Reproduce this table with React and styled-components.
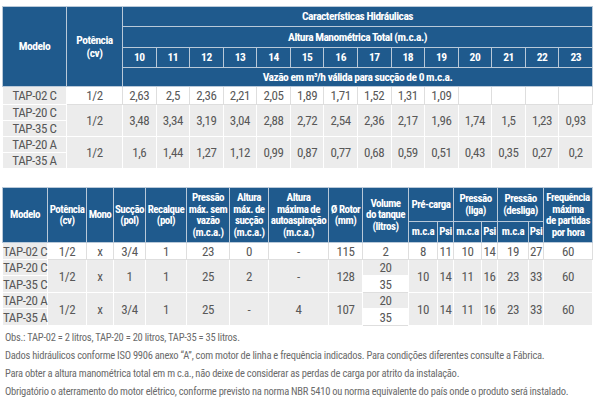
import React from 'react';
import styled, { createGlobalStyle } from 'styled-components';

const GlobalStyle = createGlobalStyle`
  html, body {
    margin: 0;
    padding: 0;
    background: #fff;
  }
  body {
    font-family: "Roboto Condensed", "Open Sans Condensed", "Arial Narrow", "Liberation Sans Narrow", "Roboto", sans-serif;
    font-stretch: condensed;
  }
`;

const Page = styled.div`
  width: 600px;
  height: 412px;
  padding: 6px 8px 0 2px;
  box-sizing: border-box;
  overflow: hidden;
`;

const Table = styled.table`
  width: 590px;
  table-layout: fixed;
  border-collapse: collapse;
  margin-bottom: ${(p) => p.$gap || 0}px;
`;

const Col = styled.col`
  width: ${(p) => p.$w}px;
`;

const Row = styled.tr`
  height: ${(p) => p.$h}px;
`;

const Th = styled.th`
  background: #1f5a8d;
  color: #fff;
  font-weight: bold;
  font-size: ${(p) => p.$size || 11}px;
  line-height: ${(p) => p.$lh || 11.5}px;
  text-align: center;
  vertical-align: middle;
  padding: 0;
  border: 1px solid #b9c9d9;
  letter-spacing: -0.5px;
  white-space: nowrap;
`;

const Td = styled.td`
  background: ${(p) => (p.$light ? '#fff' : '#ececec')};
  color: #585858;
  font-size: 13px;
  line-height: 15px;
  text-align: center;
  vertical-align: middle;
  padding: 0;
  border: 1px solid ${(p) => (p.$light ? '#dedede' : '#fff')};
  white-space: nowrap;
  letter-spacing: -0.4px;
`;

const Notes = styled.div`
  display: flex;
  flex-direction: column;
  gap: 4px;
  padding: 5px 0 0 3px;
  color: #6b6b6b;
  font-size: 10.5px;
  line-height: 14px;
  letter-spacing: -0.25px;
  white-space: nowrap;
`;

const hydraulicCols = [10, 11, 12, 13, 14, 15, 16, 17, 18, 19, 20, 21, 22, 23];

const flowRows = [
  { models: ['TAP-02 C'], values: ['2,63', '2,5', '2,36', '2,21', '2,05', '1,89', '1,71', '1,52', '1,31', '1,09', '', '', '', ''] },
  { models: ['TAP-20 C', 'TAP-35 C'], values: ['3,48', '3,34', '3,19', '3,04', '2,88', '2,72', '2,54', '2,36', '2,17', '1,96', '1,74', '1,5', '1,23', '0,93'] },
  { models: ['TAP-20 A', 'TAP-35 A'], values: ['1,6', '1,44', '1,27', '1,12', '0,99', '0,87', '0,77', '0,68', '0,59', '0,51', '0,43', '0,35', '0,27', '0,2'] },
];

const specWidths = [45, 39, 27, 32, 41, 43, 39, 60, 34, 46, 29, 16, 28, 16, 31, 15, 49];

const specRows = [
  { models: ['TAP-02 C'], before: ['1/2', 'x', '3/4', '1', '23', '0', '-', '115'], tank: ['2'], after: ['8', '11', '10', '14', '19', '27', '60'] },
  { models: ['TAP-20 C', 'TAP-35 C'], before: ['1/2', 'x', '1', '1', '25', '2', '-', '128'], tank: ['20', '35'], after: ['10', '14', '11', '16', '23', '33', '60'] },
  { models: ['TAP-20 A', 'TAP-35 A'], before: ['1/2', 'x', '3/4', '1', '25', '-', '4', '107'], tank: ['20', '35'], after: ['10', '14', '11', '16', '23', '33', '60'] },
];

const FlowTable = () => (
  <Table $gap={18}>
    <colgroup>
      <Col $w={64} />
      <Col $w={56} />
      {hydraulicCols.map((c) => (
        <Col key={c} $w={470 / 14} />
      ))}
    </colgroup>
    <thead>
      <Row $h={20}>
        <Th rowSpan={4} $size={11.5} $lh={13}>Modelo</Th>
        <Th rowSpan={4} $size={11.5} $lh={13}>Potência<br />(cv)</Th>
        <Th colSpan={14} $size={11.5} $lh={13}>Características Hidráulicas</Th>
      </Row>
      <Row $h={21}>
        <Th colSpan={14} $size={11.5} $lh={13}>Altura Manométrica Total (m.c.a.)</Th>
      </Row>
      <Row $h={20}>
        {hydraulicCols.map((c) => (
          <Th key={c} $size={11.5} $lh={13}>{c}</Th>
        ))}
      </Row>
      <Row $h={19}>
        <Th colSpan={14} $size={11.5} $lh={13}>Vazão em m³/h válida para sucção de 0 m.c.a.</Th>
      </Row>
    </thead>
    <tbody>
      {flowRows.map((r, i) => {
        const light = i === 0;
        const span = r.models.length;
        return (
          <React.Fragment key={r.models[0]}>
            <Row $h={span === 1 ? 18 : 16}>
              <Td>{r.models[0]}</Td>
              <Td rowSpan={span} $light={light}>1/2</Td>
              {r.values.map((v, j) => (
                <Td key={j} rowSpan={span} $light={light}>{v}</Td>
              ))}
            </Row>
            {r.models.slice(1).map((m) => (
              <Row key={m} $h={16}>
                <Td>{m}</Td>
              </Row>
            ))}
          </React.Fragment>
        );
      })}
    </tbody>
  </Table>
);

const SpecTable = () => (
  <Table>
    <colgroup>
      {specWidths.map((w, i) => (
        <Col key={i} $w={w} />
      ))}
    </colgroup>
    <thead>
      <Row $h={34}>
        <Th rowSpan={2}>Modelo</Th>
        <Th rowSpan={2}>Potência<br />(cv)</Th>
        <Th rowSpan={2}>Mono</Th>
        <Th rowSpan={2}>Sucção<br />(pol)</Th>
        <Th rowSpan={2}>Recalque<br />(pol)</Th>
        <Th rowSpan={2}>Pressão<br />máx. sem<br />vazão<br />(m.c.a.)</Th>
        <Th rowSpan={2}>Altura<br />máx. de<br />sucção<br />(m.c.a.)</Th>
        <Th rowSpan={2}>Altura<br />máxima de<br />autoaspiração<br />(m.c.a.)</Th>
        <Th rowSpan={2}>Ø Rotor<br />(mm)</Th>
        <Th rowSpan={2}>Volume<br />do tanque<br />(litros)</Th>
        <Th colSpan={2}>Pré-carga</Th>
        <Th colSpan={2}>Pressão<br />(liga)</Th>
        <Th colSpan={2}>Pressão<br />(desliga)</Th>
        <Th rowSpan={2}>Frequência<br />máxima<br />de partidas<br />por hora</Th>
      </Row>
      <Row $h={21}>
        <Th>m.c.a</Th>
        <Th>Psi</Th>
        <Th>m.c.a</Th>
        <Th>Psi</Th>
        <Th>m.c.a</Th>
        <Th>Psi</Th>
      </Row>
    </thead>
    <tbody>
      {specRows.map((r, i) => {
        const light = i === 0;
        const span = r.models.length;
        return (
          <React.Fragment key={r.models[0]}>
            <Row $h={span === 1 ? 17 : 16}>
              <Td>{r.models[0]}</Td>
              {r.before.map((v, j) => (
                <Td key={'b' + j} rowSpan={span} $light={light}>{v}</Td>
              ))}
              <Td $light={light}>{r.tank[0]}</Td>
              {r.after.map((v, j) => (
                <Td key={'a' + j} rowSpan={span} $light={light}>{v}</Td>
              ))}
            </Row>
            {r.models.slice(1).map((m, k) => (
              <Row key={m} $h={17}>
                <Td>{m}</Td>
                <Td $light>{r.tank[k + 1]}</Td>
              </Row>
            ))}
          </React.Fragment>
        );
      })}
    </tbody>
  </Table>
);

export default function App() {
  return (
    <>
      <GlobalStyle />
      <Page>
        <FlowTable />
        <SpecTable />
        <Notes>
          <span>Obs.: TAP-02 = 2 litros, TAP-20 = 20 litros, TAP-35 = 35 litros.</span>
          <span>Dados hidráulicos conforme ISO 9906 anexo “A”, com motor de linha e frequência indicados. Para condições diferentes consulte a Fábrica.</span>
          <span>Para obter a altura manométrica total em m c.a., não deixe de considerar as perdas de carga por atrito da instalação.</span>
          <span>Obrigatório o aterramento do motor elétrico, conforme previsto na norma NBR 5410 ou norma equivalente do país onde o produto será instalado.</span>
        </Notes>
      </Page>
    </>
  );
}
